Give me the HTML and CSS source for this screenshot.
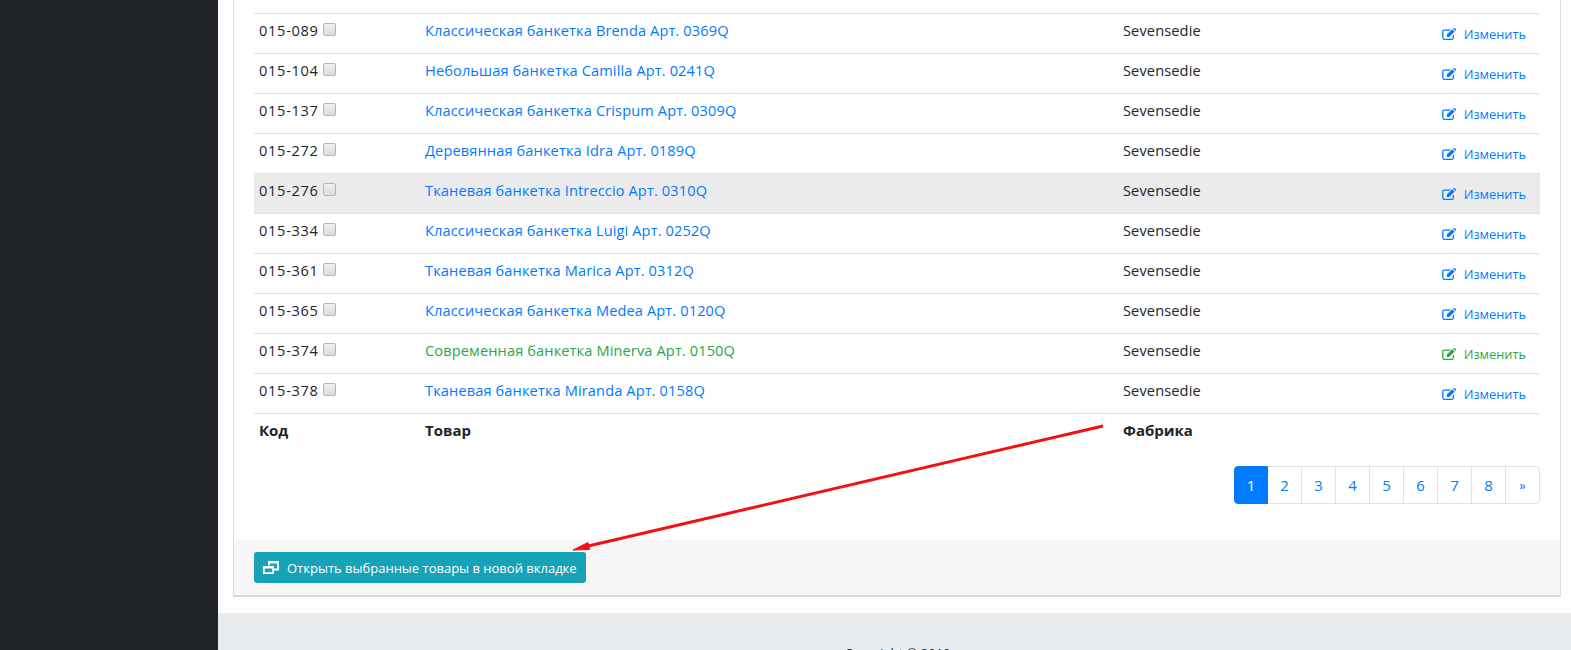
FILE: index.html
```html
<!DOCTYPE html>
<html lang="ru">
<head>
<meta charset="utf-8">
<title>Товары</title>
<link rel="stylesheet" href="styles.css">
</head>
<body>
<svg width="0" height="0" class="defs"><defs>
<symbol id="edit" viewBox="0 0 15 12"><path d="M11.300 7v2.800a1.500 1.500 0 0 1-1.500 1.500H2.300a1.500 1.500 0 0 1-1.500-1.500V3.600a1.500 1.500 0 0 1 1.500-1.500H8.500" fill="none" stroke="currentColor" stroke-width="1.300"/><path d="M4.800 6.600 10.300 1.200l2.400 2.400L7.200 9H4.800z" fill="currentColor"/><path d="M11.200.4l.5-.4h.9l1.600 1.600v.9l-.6.500z" fill="currentColor"/></symbol>
</defs></svg>
<aside class="sidebar"></aside>
<div class="main">
  <div class="content">
    <section class="card">
      <div class="card-body">
        <table class="products">
          <colgroup><col class="c-code"><col class="c-name"><col class="c-fab"><col></colgroup>
          <tbody>
            <tr><td><span class="sku">015-089</span> <input type="checkbox"></td><td><a href="#">Классическая банкетка Brenda Арт. 0369Q</a></td><td>Sevensedie</td><td class="act"><a href="#"><svg class="ico"><use href="#edit"/></svg>Изменить</a></td></tr>
            <tr><td><span class="sku">015-104</span> <input type="checkbox"></td><td><a href="#">Небольшая банкетка Camilla Арт. 0241Q</a></td><td>Sevensedie</td><td class="act"><a href="#"><svg class="ico"><use href="#edit"/></svg>Изменить</a></td></tr>
            <tr><td><span class="sku">015-137</span> <input type="checkbox"></td><td><a href="#">Классическая банкетка Crispum Арт. 0309Q</a></td><td>Sevensedie</td><td class="act"><a href="#"><svg class="ico"><use href="#edit"/></svg>Изменить</a></td></tr>
            <tr><td><span class="sku">015-272</span> <input type="checkbox"></td><td><a href="#">Деревянная банкетка Idra Арт. 0189Q</a></td><td>Sevensedie</td><td class="act"><a href="#"><svg class="ico"><use href="#edit"/></svg>Изменить</a></td></tr>
            <tr class="hover"><td><span class="sku">015-276</span> <input type="checkbox"></td><td><a href="#">Тканевая банкетка Intreccio Арт. 0310Q</a></td><td>Sevensedie</td><td class="act"><a href="#"><svg class="ico"><use href="#edit"/></svg>Изменить</a></td></tr>
            <tr><td><span class="sku">015-334</span> <input type="checkbox"></td><td><a href="#">Классическая банкетка Luigi Арт. 0252Q</a></td><td>Sevensedie</td><td class="act"><a href="#"><svg class="ico"><use href="#edit"/></svg>Изменить</a></td></tr>
            <tr><td><span class="sku">015-361</span> <input type="checkbox"></td><td><a href="#">Тканевая банкетка Marica Арт. 0312Q</a></td><td>Sevensedie</td><td class="act"><a href="#"><svg class="ico"><use href="#edit"/></svg>Изменить</a></td></tr>
            <tr><td><span class="sku">015-365</span> <input type="checkbox"></td><td><a href="#">Классическая банкетка Medea Арт. 0120Q</a></td><td>Sevensedie</td><td class="act"><a href="#"><svg class="ico"><use href="#edit"/></svg>Изменить</a></td></tr>
            <tr class="done"><td><span class="sku">015-374</span> <input type="checkbox"></td><td><a href="#">Современная банкетка Minerva Арт. 0150Q</a></td><td>Sevensedie</td><td class="act"><a href="#"><svg class="ico"><use href="#edit"/></svg>Изменить</a></td></tr>
            <tr><td><span class="sku">015-378</span> <input type="checkbox"></td><td><a href="#">Тканевая банкетка Miranda Арт. 0158Q</a></td><td>Sevensedie</td><td class="act"><a href="#"><svg class="ico"><use href="#edit"/></svg>Изменить</a></td></tr>
          </tbody>
          <tfoot>
            <tr><th>Код</th><th>Товар</th><th>Фабрика</th><th></th></tr>
          </tfoot>
        </table>
        <nav class="pager">
          <a class="page active" href="#">1</a><a class="page" href="#">2</a><a class="page" href="#">3</a><a class="page" href="#">4</a><a class="page" href="#">5</a><a class="page" href="#">6</a><a class="page" href="#">7</a><a class="page" href="#">8</a><a class="page" href="#">»</a>
        </nav>
      </div>
      <div class="card-footer">
        <button class="btn-open" type="button">
          <svg class="ico-win" viewBox="0 0 16 13"><path d="M5.900 4.500V1h9.200v7.500H11" fill="none" stroke="#fff" stroke-width="1.800"/><path d="M5 .5h11v2H5z" fill="#fff"/><path d="M.9 6h9.200v6.100H.9z" fill="none" stroke="#fff" stroke-width="1.800"/><path d="M0 5h11v2.500H0z" fill="#fff"/></svg>Открыть выбранные товары в новой вкладке
        </button>
      </div>
    </section>
  </div>
  <footer class="footer">Copyright © 2019</footer>
</div>
<svg class="arrow" width="1571" height="650" viewBox="0 0 1571 650">
  <path d="M1103 426 584 547" stroke="#f40f14" stroke-width="3" fill="none"/>
  <path d="M573 550 588 542.500 589.500 549.500z" fill="#f40f14" stroke="#f40f14" stroke-width="1"/>
</svg>
</body>
</html>
```
FILE: styles.css
```css
* { box-sizing: border-box; }
html, body { height: 100%; }
body {
  margin: 0;
  display: flex;
  height: 650px;
  overflow: hidden;
  background: #fff;
  font-family: "Open Sans", "Noto Sans", sans-serif;
  font-size: 15px;
  color: #212529;
}
.defs { position: absolute; }
.sidebar { width: 218px; flex: none; background: #212529; }
.main { flex: 1; min-width: 0; display: flex; flex-direction: column; }
.content { padding: 0 10px 0 15px; height: 613px; flex: none; }
.card {
  height: 597px;
  background: #fff;
  border: 1px solid #dcdcdf;
  border-top: 0;
  border-bottom: 2px solid #d9d9d9;
  display: flex;
  flex-direction: column;
}
.card-body { flex: 1; padding: 13px 20px 0 20px; }
.products { width: 1286px; border-collapse: collapse; table-layout: fixed; }
.c-code { width: 166px; }
.c-name { width: 698px; }
.c-fab { width: 280px; }
.products td, .products th {
  height: 40px;
  padding: 0 5px;
  text-align: left;
  vertical-align: middle;
  border-top: 1px solid #e0e0e4;
}
.products td { padding-bottom: 8px; font-size: 14.600px; letter-spacing: .12px; }
.products th { font-weight: 700; padding-bottom: 8px; }
.products a { color: #007bff; text-decoration: none; }
.sku { letter-spacing: .7px; }
.products input {
  appearance: none;
  margin: 0;
  width: 13px;
  height: 13px;
  vertical-align: 0;
  border: 1px solid #b5b5b5;
  border-radius: 2px;
  background: linear-gradient(#f0f0f0, #dcdcdc);
}
.products .act { text-align: right; padding: 0 14px 0 0; font-size: 12.800px; letter-spacing: 0; }
.hover td { background: #ebebeb; }
.products .done a { color: #28a745; }
.ico { width: 15px; height: 12px; margin-right: 7px; vertical-align: -1px; }
.pager { display: flex; justify-content: flex-end; margin-top: 12px; }
.page {
  width: 35px;
  height: 38px;
  display: flex;
  align-items: center;
  justify-content: center;
  margin-left: -1px;
  color: #007bff;
  text-decoration: none;
  background: #fff;
  border: 1px solid #dee2e6;
}
.page.active { width: 34px; background: #007bff; border-color: #007bff; color: #fff; border-radius: 4px 0 0 4px; position: relative; }
.page:last-child { border-radius: 0 4px 4px 0; font-size: 13px; }
.card-footer {
  height: 55px;
  flex: none;
  background: #f7f7f7;
  padding: 12px 20px;
}
.btn-open {
  height: 31px;
  width: 332px;
  padding: 0 9px;
  display: flex;
  align-items: center;
  background: #17a2b8;
  color: #fff;
  border: 0;
  border-radius: 3px;
  font: 400 13px "Open Sans", "Noto Sans", sans-serif;
  white-space: nowrap;
}
.ico-win { width: 16px; height: 13px; margin-right: 8px; flex: none; }
.footer {
  flex: 1;
  background: #e9ecef;
  text-align: center;
  padding: 31px 0 0 6px;
  font-size: 13px;
}
.arrow { position: absolute; left: 0; top: 0; pointer-events: none; }
```
